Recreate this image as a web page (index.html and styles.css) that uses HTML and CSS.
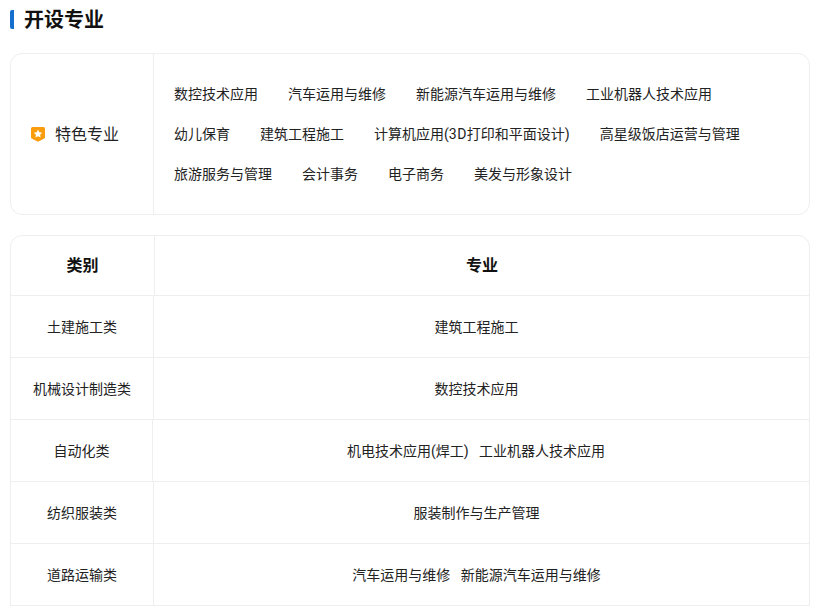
FILE: index.html
```html
<!DOCTYPE html>
<html lang="zh-CN">
<head>
<meta charset="utf-8">
<title>开设专业</title>
<link rel="stylesheet" href="styles.css">
</head>
<body>
<h2 class="title">开设专业</h2>
<section class="card">
  <div class="card-label">
    <svg class="badge" width="16" height="16" viewBox="0 0 16 16"><path fill="#f99d0d" d="M2.500 1h11A1.500 1.500 0 0 1 15 2.500V11.200a1.500 1.500 0 0 1-.7 1.200L9 15.300a2 2 0 0 1-2 0L1.700 12.400A1.500 1.500 0 0 1 1 11.200V2.500A1.500 1.500 0 0 1 2.500 1z"/><path fill="#fff" d="M8 3.600l1.300 2.700 2.900.4-2.100 2 .5 2.900L8 10.200l-2.600 1.400.5-2.900-2.100-2 2.900-.4z"/></svg>
    <span>特色专业</span>
  </div>
  <div class="card-list">
    <div class="line"><span>数控技术应用</span><span>汽车运用与维修</span><span>新能源汽车运用与维修</span><span>工业机器人技术应用</span></div>
    <div class="line"><span>幼儿保育</span><span>建筑工程施工</span><span>计算机应用(<span class="latin">3D</span>打印和平面设计)</span><span>高星级饭店运营与管理</span></div>
    <div class="line"><span>旅游服务与管理</span><span>会计事务</span><span>电子商务</span><span>美发与形象设计</span></div>
  </div>
</section>
<section class="table">
  <div class="row head"><div class="cat w144">类别</div><div class="maj">专业</div></div>
  <div class="row"><div class="cat w143">土建施工类</div><div class="maj">建筑工程施工</div></div>
  <div class="row"><div class="cat w143">机械设计制造类</div><div class="maj">数控技术应用</div></div>
  <div class="row"><div class="cat w142">自动化类</div><div class="maj">机电技术应用(焊工)&nbsp;&nbsp;&nbsp;工业机器人技术应用</div></div>
  <div class="row"><div class="cat w143">纺织服装类</div><div class="maj">服装制作与生产管理</div></div>
  <div class="row"><div class="cat w143">道路运输类</div><div class="maj">汽车运用与维修&nbsp;&nbsp;&nbsp;新能源汽车运用与维修</div></div>
</section>
</body>
</html>
```
FILE: styles.css
```css
* { box-sizing: border-box; }
html, body { margin: 0; padding: 0; background: #fff; }
body {
  width: 821px;
  height: 606px;
  overflow: hidden;
  padding: 10px 11px 0 10px;
  font-family: Roboto, "Noto Sans CJK SC", sans-serif;
  color: #222;
  font-size: 14px;
}
.title {
  margin: 0 0 24px;
  height: 19px;
  line-height: 20px;
  padding-left: 10px;
  border-left: 4px solid #1470cc;
  border-radius: 2px;
  font-size: 20px;
  font-weight: 700;
  color: #111;
}
.card {
  display: flex;
  height: 162px;
  border: 1px solid #eee;
  border-radius: 12px;
  margin-bottom: 20px;
}
.card-label {
  width: 143px;
  flex: none;
  display: flex;
  align-items: center;
  gap: 9px;
  padding: 0 0 2px 19px;
  border-right: 1px solid #eee;
  font-size: 16px;
  color: #222;
}
.badge { flex: none; margin-top: 2px; }
.card-list {
  flex: 1;
  display: flex;
  flex-direction: column;
  justify-content: center;
  padding: 0 0 1px 20px;
  line-height: 40px;
}
.line { display: flex; column-gap: 30px; }
.latin { letter-spacing: 0.5px; }
.table {
  border: 1px solid #eee;
  border-radius: 12px 12px 0 0;
}
.row {
  display: flex;
  height: 62px;
  border-bottom: 1px solid #eee;
  text-align: center;
}
.row.head { height: 60px; font-size: 16px; font-weight: 700; color: #111; }
.cat {
  flex: none;
  display: flex;
  align-items: center;
  justify-content: center;
  padding-bottom: 2px;
  border-right: 1px solid #eee;
}
.head .cat, .head .maj { padding-bottom: 4px; padding-right: 0; }
.w144 { width: 144px; }
.w143 { width: 143px; }
.w142 { width: 142px; }
.maj {
  flex: 1;
  display: flex;
  align-items: center;
  justify-content: center;
  padding: 0 10px 2px 0;
}
```
